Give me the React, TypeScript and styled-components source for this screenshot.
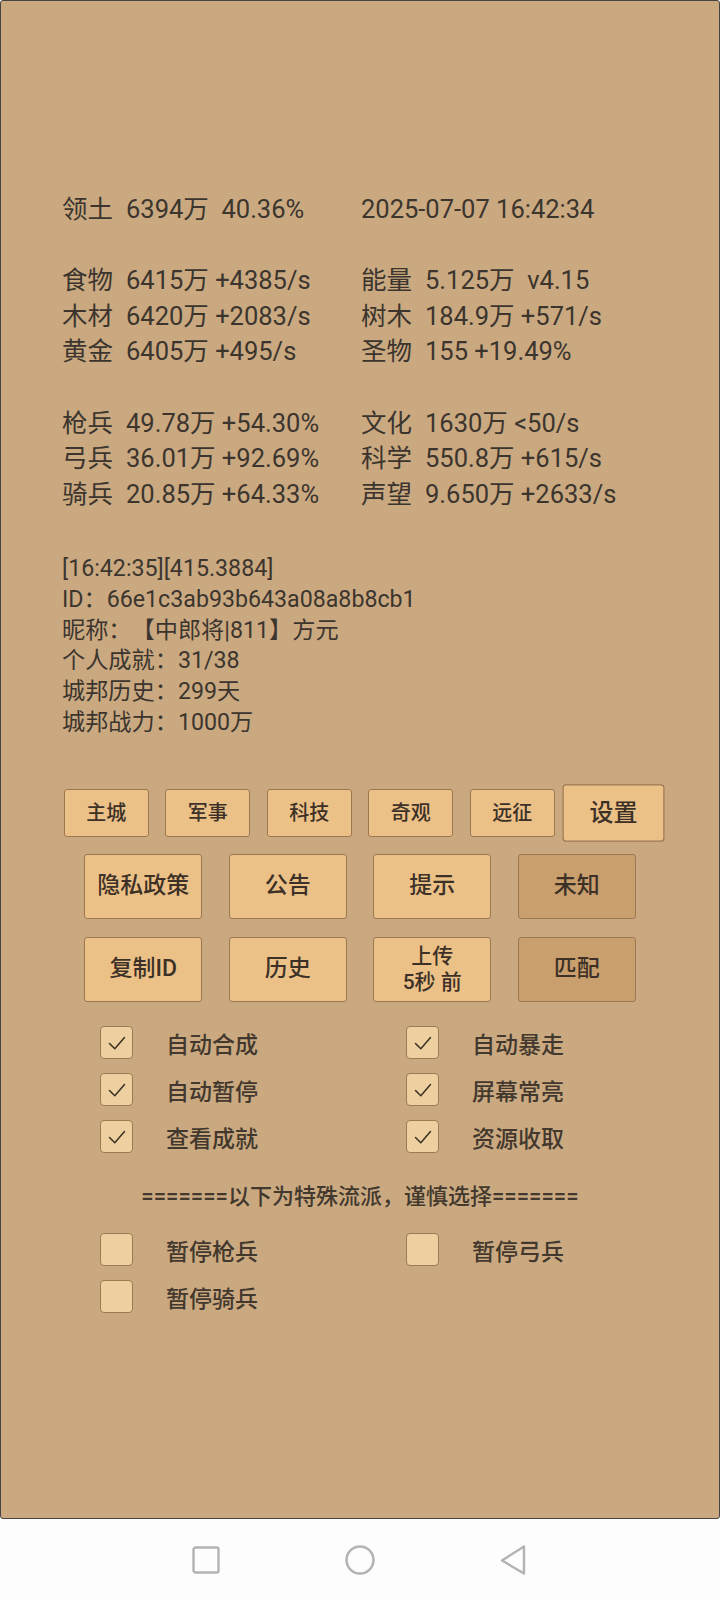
import React from "react";
import styled, { createGlobalStyle } from "styled-components";

const GlobalStyle = createGlobalStyle`
  html, body {
    margin: 0;
    padding: 0;
    background: #fdfdfd;
  }
  body {
    font-family: Roboto, "Noto Sans CJK SC", "Noto Sans", sans-serif;
    color: #3c352e;
    text-spacing-trim: space-all;
  }
  * { box-sizing: border-box; }
`;

const Screen = styled.div`
  width: 720px;
  height: 1600px;
  display: flex;
  flex-direction: column;
  overflow: hidden;
`;

const Panel = styled.main`
  height: 1519px;
  background: #caa981;
  border: 1px solid #474542;
  border-radius: 3px;
  padding-top: 191px;
  display: flex;
  flex-direction: column;
`;

const StatsGrid = styled.div`
  display: grid;
  grid-template-columns: 299px auto;
  grid-auto-rows: 35.6px;
  padding-left: 61px;
  font-size: 25.5px;
  line-height: 35.6px;
  white-space: pre;
`;

const StatCell = styled.div`
  display: flex;
  align-items: center;
`;

const StatLabel = styled.span`
  width: 51px;
  margin-right: 13px;
  flex: none;
`;

const Spacer = styled.div`
  grid-column: 1 / span 2;
`;

const InfoBlock = styled.div`
  margin-top: 40.6px;
  padding-left: 61px;
  font-size: 23.2px;
  line-height: 30.8px;
  white-space: pre;
`;

const InfoLine = styled.div``;

const ButtonRow = styled.div<{ $gap: number; $top: number }>`
  display: flex;
  justify-content: center;
  gap: ${(p) => p.$gap}px;
  margin-top: ${(p) => p.$top}px;
`;

const GameButton = styled.button<{
  $w: number;
  $h: number;
  $fs: number;
  $dark?: boolean;
  $raised?: boolean;
}>`
  width: ${(p) => p.$w}px;
  height: ${(p) => p.$h}px;
  flex: none;
  padding: 0;
  background: ${(p) => (p.$dark ? "#c99f6e" : "#ecc188")};
  border: 1px solid #9b7852;
  border-radius: 3px;
  font-family: Roboto, "Noto Sans CJK SC", sans-serif;
  font-size: ${(p) => p.$fs}px;
  font-weight: 500;
  color: #3d3127;
  line-height: 26px;
  display: flex;
  flex-direction: column;
  align-items: center;
  justify-content: center;
  transform: ${(p) => (p.$raised ? "scale(1.2)" : "none")};
`;

const CheckGrid = styled.div<{ $top: number }>`
  display: grid;
  grid-template-columns: 306px auto;
  grid-auto-rows: 47px;
  padding-left: 99px;
  margin-top: ${(p) => p.$top}px;
`;

const CheckItem = styled.label`
  display: flex;
  align-items: center;
  font-size: 23px;
  font-weight: 500;
  color: #43382d;
`;

const Box = styled.span`
  width: 33px;
  height: 33px;
  flex: none;
  margin-right: 33px;
  background: #eecf9f;
  border: 1px solid #9b7a54;
  border-radius: 4px;
  display: flex;
  align-items: center;
  justify-content: center;
`;

const Separator = styled.div`
  margin-top: 17px;
  margin-bottom: 9px;
  line-height: 40px;
  text-align: center;
  font-size: 22px;
  font-weight: 500;
  color: #43382d;
  white-space: pre;
`;

const NavBar = styled.nav`
  flex: 1;
  background: #fdfdfd;
  display: flex;
  align-items: center;
  justify-content: center;
  gap: 124px;
`;

const NavIcon = styled.svg`
  width: 30px;
  height: 30px;
  flex: none;
`;

const Check = () => (
  <svg width="24" height="24" viewBox="0 0 24 24">
    <path
      d="M4.5 12.5 L9.8 17.8 L19.5 6.5"
      fill="none"
      stroke="#3b3024"
      strokeWidth="1.5"
      strokeLinecap="round"
      strokeLinejoin="round"
    />
  </svg>
);

type Stat = [string, string];

const statRows: (Stat[] | null)[] = [
  [
    ["领土", "6394万  40.36%"],
    ["", "2025-07-07 16:42:34"],
  ],
  null,
  [
    ["食物", "6415万 +4385/s"],
    ["能量", "5.125万  v4.15"],
  ],
  [
    ["木材", "6420万 +2083/s"],
    ["树木", "184.9万 +571/s"],
  ],
  [
    ["黄金", "6405万 +495/s"],
    ["圣物", "155 +19.49%"],
  ],
  null,
  [
    ["枪兵", "49.78万 +54.30%"],
    ["文化", "1630万 <50/s"],
  ],
  [
    ["弓兵", "36.01万 +92.69%"],
    ["科学", "550.8万 +615/s"],
  ],
  [
    ["骑兵", "20.85万 +64.33%"],
    ["声望", "9.650万 +2633/s"],
  ],
];

const infoLines = [
  "[16:42:35][415.3884]",
  "ID：66e1c3ab93b643a08a8b8cb1",
  "昵称：【中郎将|811】方元",
  "个人成就：31/38",
  "城邦历史：299天",
  "城邦战力：1000万",
];

const topTabs = ["主城", "军事", "科技", "奇观", "远征", "设置"];

const checks = [
  ["自动合成", true],
  ["自动暴走", true],
  ["自动暂停", true],
  ["屏幕常亮", true],
  ["查看成就", true],
  ["资源收取", true],
] as const;

const special = ["暂停枪兵", "暂停弓兵", "暂停骑兵"];

export default function App() {
  return (
    <>
      <GlobalStyle />
      <Screen>
        <Panel>
          <StatsGrid>
            {statRows.map((row, i) =>
              row === null ? (
                <Spacer key={i} />
              ) : (
                row.map(([label, value], j) => (
                  <StatCell key={`${i}-${j}`}>
                    {label ? <StatLabel>{label}</StatLabel> : null}
                    <span>{value}</span>
                  </StatCell>
                ))
              )
            )}
          </StatsGrid>

          <InfoBlock>
            {infoLines.map((l) => (
              <InfoLine key={l}>{l}</InfoLine>
            ))}
          </InfoBlock>

          <ButtonRow $gap={16.5} $top={51}>
            {topTabs.map((t) => (
              <GameButton key={t} $w={85} $h={48} $fs={20} $raised={t === "设置"}>
                {t}
              </GameButton>
            ))}
          </ButtonRow>

          <ButtonRow $gap={26.5} $top={17}>
            <GameButton $w={118} $h={65} $fs={23}>隐私政策</GameButton>
            <GameButton $w={118} $h={65} $fs={23}>公告</GameButton>
            <GameButton $w={118} $h={65} $fs={23}>提示</GameButton>
            <GameButton $w={118} $h={65} $fs={23} $dark>未知</GameButton>
          </ButtonRow>

          <ButtonRow $gap={26.5} $top={18}>
            <GameButton $w={118} $h={65} $fs={23}>复制ID</GameButton>
            <GameButton $w={118} $h={65} $fs={23}>历史</GameButton>
            <GameButton $w={118} $h={65} $fs={21}>
              <span>上传</span>
              <span>5秒 前</span>
            </GameButton>
            <GameButton $w={118} $h={65} $fs={23} $dark>匹配</GameButton>
          </ButtonRow>

          <CheckGrid $top={17.5}>
            {checks.map(([label, on]) => (
              <CheckItem key={label}>
                <Box>{on ? <Check /> : null}</Box>
                {label}
              </CheckItem>
            ))}
          </CheckGrid>

          <Separator>{"=======以下为特殊流派，谨慎选择======="}</Separator>

          <CheckGrid $top={0}>
            {special.map((label) => (
              <CheckItem key={label}>
                <Box />
                {label}
              </CheckItem>
            ))}
          </CheckGrid>
        </Panel>

        <NavBar>
          <NavIcon viewBox="0 0 30 30">
            <rect x="2.5" y="2.5" width="25" height="25" rx="2" fill="none" stroke="#b3b3b3" strokeWidth="2.4" />
          </NavIcon>
          <NavIcon viewBox="0 0 30 30">
            <circle cx="15" cy="15" r="13.5" fill="none" stroke="#b3b3b3" strokeWidth="2.4" />
          </NavIcon>
          <NavIcon viewBox="0 0 30 30">
            <path d="M25 1.5 L25 28.5 L3 15.5 Z" fill="none" stroke="#b3b3b3" strokeWidth="2.4" strokeLinejoin="round" />
          </NavIcon>
        </NavBar>
      </Screen>
    </>
  );
}
